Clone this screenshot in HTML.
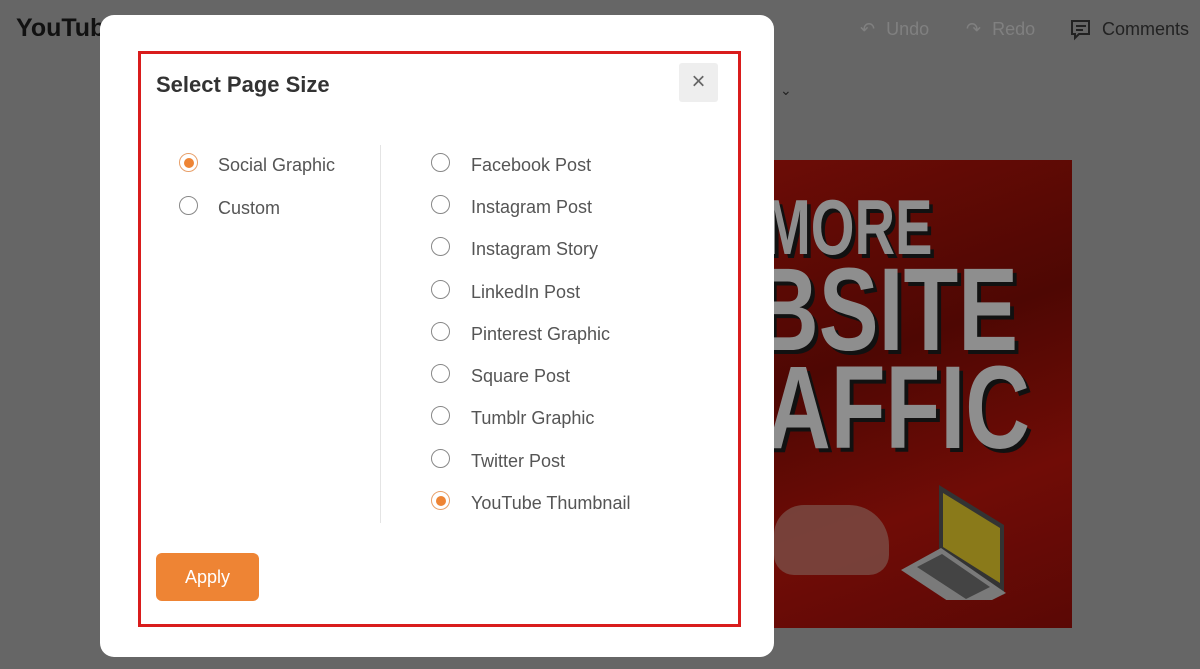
<!DOCTYPE html>
<html><head><meta charset="utf-8"><style>
body{margin:0;width:1200px;height:669px;background:#666;position:relative;overflow:hidden;font-family:"Liberation Sans","DejaVu Sans",sans-serif}
.a{position:absolute}
.t{font-size:18px;color:#555;white-space:nowrap}
.r{position:absolute;width:17px;height:17px;border:1.5px solid #888;border-radius:50%;box-sizing:content-box}
.r.on{border-color:#e8a06a}
.r.on::after{content:"";position:absolute;left:3.5px;top:3.5px;width:10px;height:10px;border-radius:50%;background:#ee8434}
.big{font-family:"Liberation Sans Narrow","Liberation Sans",sans-serif;font-weight:bold;color:#8e8e8e;text-shadow:5px 4px 0 #111;transform-origin:left top;white-space:nowrap}
</style></head><body>
<div class="a" style="left:16px;top:14px;font-size:25px;font-weight:bold;color:#111">YouTube</div>
<div class="a" style="left:860px;top:19px;font-size:18px;color:#808080">&#8630; <span style="margin-left:6px">Undo</span></div>
<div class="a" style="left:966px;top:19px;font-size:18px;color:#808080">&#8631; <span style="margin-left:6px">Redo</span></div>
<svg class="a" style="left:1070px;top:19px" width="22" height="22" viewBox="0 0 22 22"><path d="M2 2h17v13H9l-4 4v-4H2z" fill="none" stroke="#222" stroke-width="2"/><path d="M6 7h10M6 11h7" stroke="#222" stroke-width="2"/></svg>
<div class="a" style="left:1102px;top:19px;font-size:18px;color:#222">Comments</div>
<div class="a" style="left:780px;top:82px;font-size:14px;color:#222">&#8964;</div>
<div class="a" style="left:774px;top:160px;width:298px;height:468px;background:linear-gradient(160deg,#6c0c06,#4e0703 40%,#700c06 70%,#5a0805);overflow:hidden">
 <div class="big a" style="left:-10px;top:22px;font-size:78px;transform:scaleX(.72)">MORE</div>
 <div class="big a" style="left:-20px;top:82px;font-size:118px;transform:scaleX(.76)">BSITE</div>
 <div class="big a" style="left:-8px;top:180px;font-size:118px;transform:scaleX(.76)">AFFIC</div>
 <div class="a" style="left:0;top:345px;width:115px;height:70px;background:#7a4e46;border-radius:30px 40px 20px 20px;opacity:.8"></div>
 <svg class="a" style="left:125px;top:325px" width="115" height="115" viewBox="0 0 115 115"><path d="M40 0l65 40v70L40 70z" fill="#333"/><path d="M44 8l57 35v55L44 62z" fill="#8a7a1a"/><path d="M2 85l40-22 65 45-40 20z" fill="#7a7a7a"/><path d="M18 82l25-13 48 33-24 12z" fill="#444"/></svg>
</div>
<div class="a" style="left:100px;top:15px;width:674px;height:642px;background:#fff;border-radius:14px"></div>
<div class="a" style="left:138px;top:51px;width:603px;height:576px;border:3px solid #d91c1c;box-sizing:border-box"></div>
<div class="a" style="left:156px;top:72px;font-size:22px;font-weight:bold;color:#333">Select Page Size</div>
<div class="a" style="left:679px;top:63px;width:39px;height:39px;background:#eee;border-radius:3px;text-align:center;line-height:38px;font-size:24px;color:#666">&#215;</div>
<div class="a" style="left:380px;top:145px;width:1px;height:378px;background:#e4e4e4"></div>
<div class="r on" style="left:179px;top:153px"></div><div class="a t" style="left:218px;top:155px">Social Graphic</div>
<div class="r" style="left:179px;top:196px"></div><div class="a t" style="left:218px;top:198px">Custom</div>
<div class="r" style="left:431px;top:153px"></div><div class="a t" style="left:471px;top:155px">Facebook Post</div>
<div class="r" style="left:431px;top:195px"></div><div class="a t" style="left:471px;top:197px">Instagram Post</div>
<div class="r" style="left:431px;top:237px"></div><div class="a t" style="left:471px;top:239px">Instagram Story</div>
<div class="r" style="left:431px;top:280px"></div><div class="a t" style="left:471px;top:282px">LinkedIn Post</div>
<div class="r" style="left:431px;top:322px"></div><div class="a t" style="left:471px;top:324px">Pinterest Graphic</div>
<div class="r" style="left:431px;top:364px"></div><div class="a t" style="left:471px;top:366px">Square Post</div>
<div class="r" style="left:431px;top:406px"></div><div class="a t" style="left:471px;top:408px">Tumblr Graphic</div>
<div class="r" style="left:431px;top:449px"></div><div class="a t" style="left:471px;top:451px">Twitter Post</div>
<div class="r on" style="left:431px;top:491px"></div><div class="a t" style="left:471px;top:493px">YouTube Thumbnail</div>
<div class="a" style="left:156px;top:553px;width:103px;height:48px;background:#ee8434;border-radius:6px;color:#fff;font-size:18px;text-align:center;line-height:48px">Apply</div>
</body></html>
